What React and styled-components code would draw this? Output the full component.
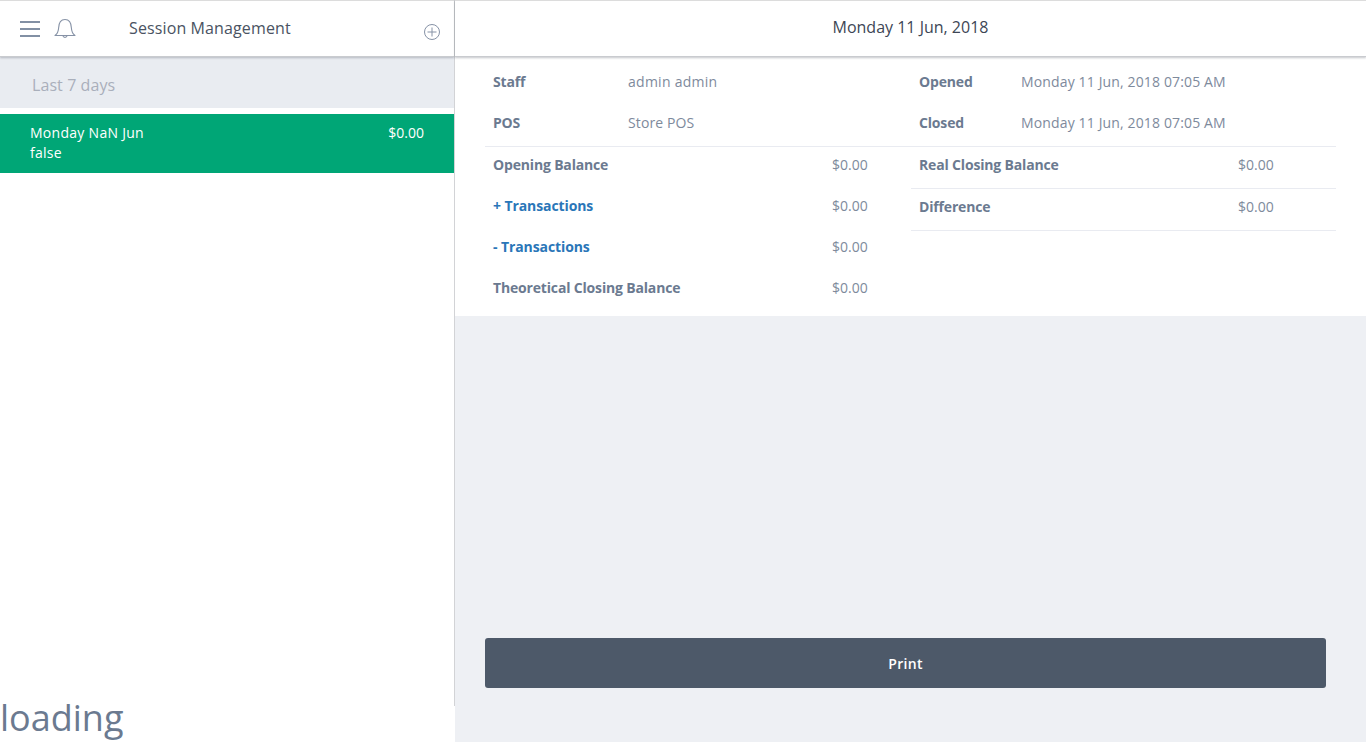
import styled, { createGlobalStyle } from "styled-components";

const GlobalStyle = createGlobalStyle`
  html, body { margin: 0; padding: 0; height: 100%; }
  body {
    font-family: "Open Sans", "Liberation Sans", sans-serif;
    font-size: 14px;
    color: #6b7a90;
    background: #fff;
    overflow: hidden;
  }
`;

const Page = styled.div`
  display: flex;
  width: 1366px;
  height: 742px;
  overflow: hidden;
`;

const Sidebar = styled.aside`
  display: flex;
  flex-direction: column;
  flex: 0 0 455px;
  background: #fff;
`;

const SidebarBody = styled.div`
  display: flex;
  flex-direction: column;
  height: 706px;
  border-right: 1px solid #d2d3d6;
`;

const TopBar = styled.header`
  display: flex;
  align-items: center;
  flex: 0 0 57px;
  box-sizing: border-box;
  height: 57px;
  background: #fff;
  border-top: 1px solid #dcdcdc;
  border-bottom: 1px solid #c9cbcf;
  box-shadow: 0 1px 2px rgba(60, 66, 80, 0.3);
  position: relative;
  z-index: 1;
`;

const SideBar = styled(TopBar)`
  padding: 0 13px 0 20px;
`;

const MainBar = styled(TopBar)`
  justify-content: center;
  padding-bottom: 3px;
  font-size: 16px;
  color: #3d4655;
`;

const BellButton = styled.span`
  display: flex;
  margin-left: 14px;
  color: #8692a6;
`;

const MenuButton = styled.span`
  display: flex;
  color: #8290a4;
`;

const SideTitle = styled.h1`
  margin: 0 0 2px 53px;
  flex: 1;
  font-size: 16px;
  font-weight: 400;
  letter-spacing: 0.12px;
  color: #4a5362;
`;

const AddButton = styled.span`
  display: flex;
  margin-top: 6px;
  color: #8692a6;
`;

const GroupHeading = styled.div`
  display: flex;
  align-items: center;
  box-sizing: border-box;
  height: 51px;
  padding: 5px 0 0 32px;
  background: #e9ecf1;
  color: #a9afbb;
  font-size: 16px;
  letter-spacing: 0.08px;
`;

const SessionRow = styled.div`
  display: flex;
  justify-content: space-between;
  height: 59px;
  box-sizing: border-box;
  margin-top: 6px;
  padding: 9px 30px;
  background: #00a676;
  color: #fff;
  line-height: 20px;
`;

const SessionLines = styled.div`
  display: flex;
  flex-direction: column;
  letter-spacing: 0.28px;
`;

const Loading = styled.div`
  font-size: 36px;
  line-height: 24px;
  height: 36px;
  color: #6b7a90;
  white-space: nowrap;
`;

const Main = styled.main`
  display: flex;
  flex-direction: column;
  flex: 1;
  background: #eef0f4;
`;

const Details = styled.section`
  height: 259px;
  box-sizing: border-box;
  padding: 4px 30px 0;
  background: #fff;
`;

const MetaRow = styled.div`
  display: grid;
  grid-template-columns: 426px 1fr;
  padding-bottom: 3px;
  border-bottom: 1px solid #e9ebf1;
`;

const Columns = styled.div`
  display: grid;
  grid-template-columns: 426px 1fr;
`;

const Stack = styled.div`
  display: flex;
  flex-direction: column;
`;

const Line = styled.div`
  display: flex;
  align-items: center;
  box-sizing: border-box;
  height: 41px;
  padding-left: 8px;
`;

const BalanceLine = styled(Line)`
  height: ${({ $ruled }) => ($ruled ? "42px" : "41px")};
  padding-bottom: 6px;
  border-bottom: ${({ $ruled }) => ($ruled ? "1px solid #e9ebf1" : "none")};
`;

const Label = styled.span`
  flex: 0 0 ${({ $width }) => $width}px;
  font-weight: 700;
  letter-spacing: ${({ $link }) => ($link ? "-0.1px" : "-0.17px")};
  color: ${({ $link }) => ($link ? "#2a76b8" : "#6b7a90")};
`;

const Value = styled.span`
  letter-spacing: ${({ $tracking }) => $tracking || 0}px;
  color: #7e8a9c;
`;

const Footer = styled.div`
  margin-top: auto;
  padding: 0 40px 54px 30px;
`;

const PrintButton = styled.button`
  display: block;
  width: 100%;
  height: 50px;
  border: 0;
  border-radius: 3px;
  background: #4d5969;
  color: #fff;
  font: 600 14px "Open Sans", "Liberation Sans", sans-serif;
  letter-spacing: 0.3px;
`;

function MenuIcon() {
  return (
    <svg width="20" height="18" viewBox="0 0 20 18" fill="none" stroke="currentColor" strokeWidth="2">
      <path d="M0 2h20M0 9h20M0 16h20" />
    </svg>
  );
}

function BellIcon() {
  return (
    <svg width="22" height="22" viewBox="0 0 22 22" fill="none" stroke="currentColor" strokeWidth="1.1">
      <path d="M1 17.5c2.2-1.6 3.4-3.4 3.6-7.5C4.8 5 7.2 1.500 11 1.500s6.200 3.500 6.400 8.500c.2 4.100 1.400 5.900 3.600 7.500z" strokeLinejoin="round" />
      <path d="M8.800 17.700a2.300 2.300 0 0 0 4.400 0" />
    </svg>
  );
}

function AddIcon() {
  return (
    <svg width="18" height="18" viewBox="0 0 18 18" fill="none" stroke="currentColor" strokeWidth="1">
      <circle cx="9" cy="9" r="7.5" />
      <path d="M9 4.500v9M4.500 9h9" />
    </svg>
  );
}

export default function App() {
  return (
    <Page>
      <GlobalStyle />
      <Sidebar>
        <SidebarBody>
          <SideBar>
            <MenuButton><MenuIcon /></MenuButton>
            <BellButton><BellIcon /></BellButton>
            <SideTitle>Session Management</SideTitle>
            <AddButton><AddIcon /></AddButton>
          </SideBar>
          <GroupHeading>Last 7 days</GroupHeading>
          <SessionRow>
            <SessionLines>
              <span>Monday NaN Jun</span>
              <span>false</span>
            </SessionLines>
            <span>$0.00</span>
          </SessionRow>
        </SidebarBody>
        <Loading>loading</Loading>
      </Sidebar>
      <Main>
        <MainBar>Monday 11 Jun, 2018</MainBar>
        <Details>
          <MetaRow>
            <Stack>
              <Line><Label $width={135}>Staff</Label><Value $tracking={0.27}>admin admin</Value></Line>
              <Line><Label $width={135}>POS</Label><Value $tracking={0.11}>Store POS</Value></Line>
            </Stack>
            <Stack>
              <Line><Label $width={102}>Opened</Label><Value $tracking={0.14}>Monday 11 Jun, 2018 07:05 AM</Value></Line>
              <Line><Label $width={102}>Closed</Label><Value $tracking={0.14}>Monday 11 Jun, 2018 07:05 AM</Value></Line>
            </Stack>
          </MetaRow>
          <Columns>
            <Stack>
              <BalanceLine><Label $width={339}>Opening Balance</Label><Value>$0.00</Value></BalanceLine>
              <BalanceLine><Label $width={339} $link>+ Transactions</Label><Value>$0.00</Value></BalanceLine>
              <BalanceLine><Label $width={339} $link>- Transactions</Label><Value>$0.00</Value></BalanceLine>
              <BalanceLine><Label $width={339}>Theoretical Closing Balance</Label><Value>$0.00</Value></BalanceLine>
            </Stack>
            <Stack>
              <BalanceLine $ruled><Label $width={319}>Real Closing Balance</Label><Value>$0.00</Value></BalanceLine>
              <BalanceLine $ruled><Label $width={319}>Difference</Label><Value>$0.00</Value></BalanceLine>
            </Stack>
          </Columns>
        </Details>
        <Footer>
          <PrintButton>Print</PrintButton>
        </Footer>
      </Main>
    </Page>
  );
}
